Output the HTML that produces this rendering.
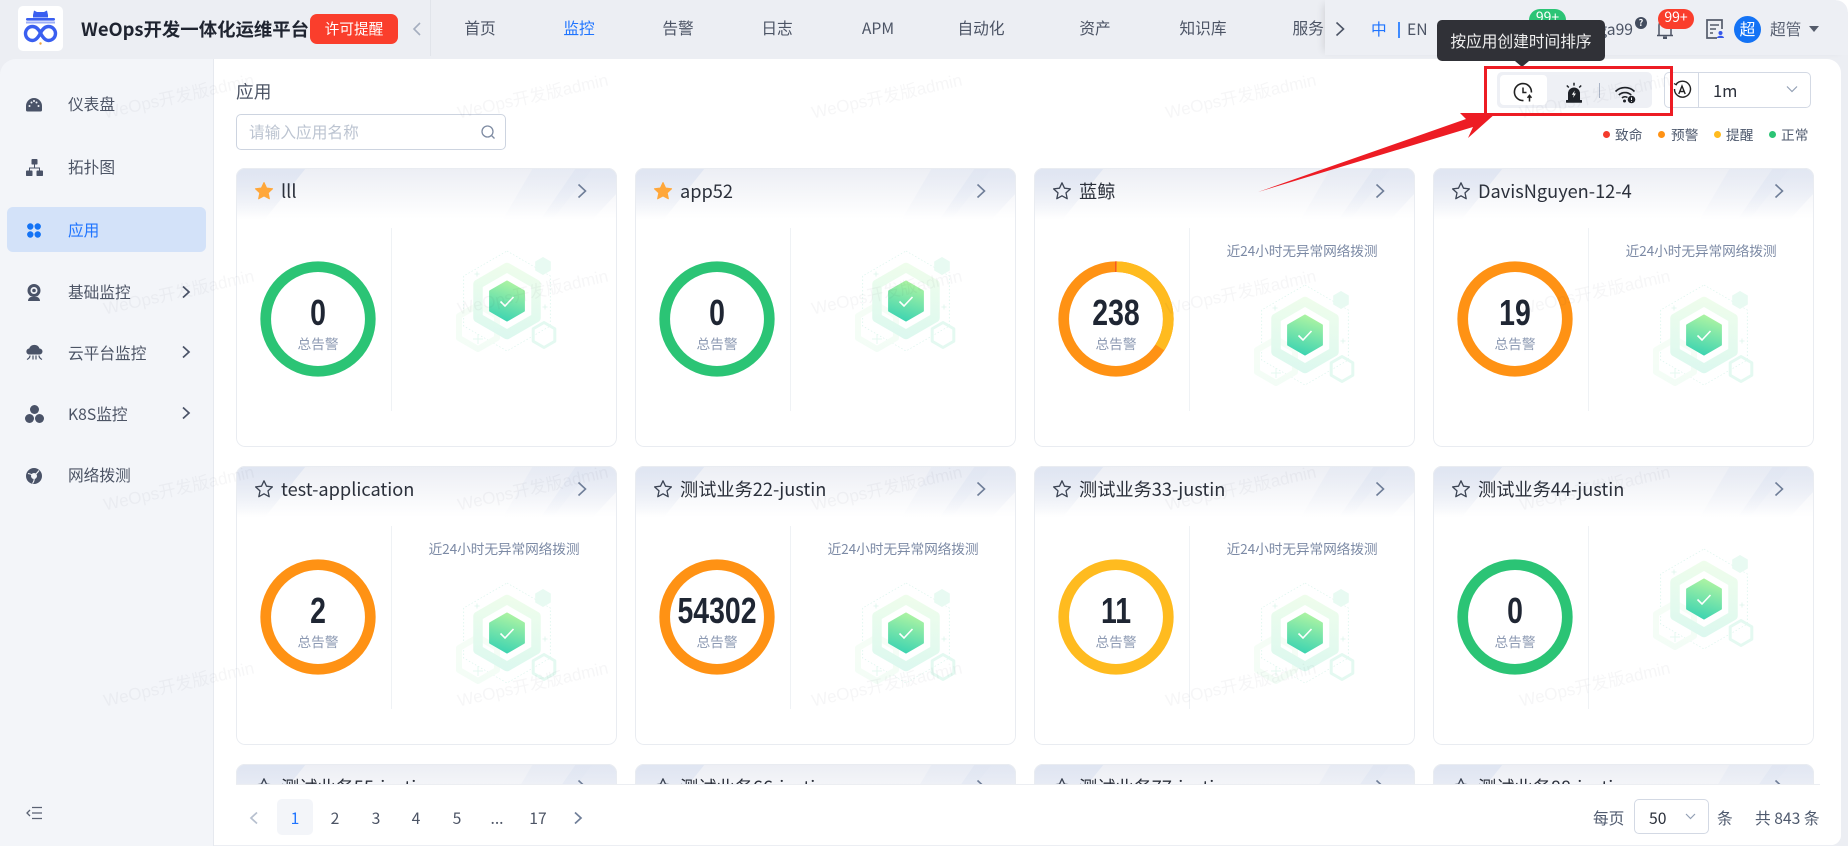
<!DOCTYPE html>
<html lang="zh"><head><meta charset="utf-8"><title>WeOps</title>
<style>
*{box-sizing:border-box;margin:0;padding:0}
html,body{width:1848px;height:846px;overflow:hidden;background:#eceef3}
body{position:relative;font-family:"Noto Sans CJK SC","Liberation Sans",sans-serif;font-size:15.7px;color:#4a5262}
i{font-style:normal}
.a{position:absolute;white-space:nowrap}
.nav{position:absolute;top:16px;height:24px;line-height:24px;width:100px;text-align:center;white-space:nowrap;color:#4c5465}
svg{position:absolute;overflow:visible}
.side{position:absolute;left:0;top:59px;width:214px;height:787px;background:#f3f5f9;border-right:1px solid #e6e9ef;border-top-left-radius:16px}
.si{position:absolute;left:68px;height:24px;line-height:24px;white-space:nowrap;color:#4c5465}
.main{position:absolute;left:214px;top:59px;width:1627px;height:786px;background:#fff;border-radius:0 14px 10px 0}
.card{position:absolute;width:381px;height:279px;background:#fff;border-radius:9px;overflow:hidden}
.card::after{content:"";position:absolute;left:0;top:0;right:0;bottom:0;border:1px solid #e9ecf1;border-radius:9px;pointer-events:none}
.card.c3{height:30px}
.card>svg{position:absolute}
.h{left:0;top:0}
.s{left:18px;top:13px}
.c{left:340px;top:15px}
.d{left:22px;top:91px}
.i1{left:211px;top:73px}
.i2{left:211px;top:107px}
.t{position:absolute;left:45px;top:9px;height:28px;line-height:28px;font-size:18.2px;color:#2b303b;white-space:nowrap}
.dv{position:absolute;left:155px;top:60px;width:1px;height:183px;background:#eff2f5}
.n{position:absolute;left:22px;width:120px;top:125px;height:40px;text-align:center;font:bold 36px/40px "Liberation Sans",sans-serif;color:#1f2633;transform:scaleX(.79)}
.l{position:absolute;left:22px;width:120px;top:165px;height:20px;line-height:20px;text-align:center;font-size:13.7px;color:#8d9ab3}
.txt{position:absolute;left:155px;width:226px;top:72px;height:20px;line-height:20px;text-align:center;font-size:13.7px;color:#7c8aa5;white-space:nowrap;letter-spacing:-.1px}
.pg{position:absolute;top:806px;height:24px;line-height:24px;width:36px;text-align:center;color:#4c5465}
.lg{position:absolute;top:124px;height:20px;line-height:20px;font-size:13.7px;color:#4f5a6e;white-space:nowrap}
.dot{position:absolute;top:131px;width:7px;height:7px;border-radius:50%}
.wm{position:absolute;width:170px;text-align:center;font:17px/22px "Liberation Sans","Noto Sans CJK SC",sans-serif;color:rgba(40,52,80,.042);transform:rotate(-12.5deg);white-space:nowrap;pointer-events:none;z-index:50}
</style></head><body>
<svg width="0" height="0" style="position:absolute">
<defs>
<linearGradient id="hb" x1="0" y1="0" x2="0" y2="1"><stop offset="0" stop-color="#eceef4"/><stop offset="1" stop-color="#fff"/></linearGradient>
<linearGradient id="hs" x1="0" y1="0" x2="0" y2="1"><stop offset="0" stop-color="#dfe5f2"/><stop offset="1" stop-color="#dfe5f2" stop-opacity="0"/></linearGradient>
<linearGradient id="g1" gradientUnits="userSpaceOnUse" x1="8" y1="-20" x2="-4" y2="20"><stop offset="0" stop-color="#b2f5a2"/><stop offset="1" stop-color="#3cd4b1"/></linearGradient>
<linearGradient id="g2" gradientUnits="userSpaceOnUse" x1="5" y1="-38" x2="-5" y2="38"><stop offset="0" stop-color="#effdec"/><stop offset="1" stop-color="#dcf8ef"/></linearGradient>
<linearGradient id="g3" gradientUnits="userSpaceOnUse" x1="0" y1="0" x2="0" y2="52"><stop offset="0" stop-color="#f5fdf6"/><stop offset="1" stop-color="#f0fcf6"/></linearGradient>
<symbol id="hd" viewBox="0 0 381 51" width="381" height="51">
<rect width="381" height="51" fill="url(#hb)"/>
<polygon points="0,0 70,0 29,51 0,51" fill="url(#hs)"/>
<polygon points="297,0 357,0 317,51 267,51" fill="url(#hs)" opacity=".45"/>
<polygon points="340,0 381,0 381,25 357,51 305,51" fill="url(#hs)" opacity=".8"/>
</symbol>
<symbol id="ill" viewBox="-60 -60 120 120" width="120" height="120">
<polygon points="0,-50 43.3,-25 43.3,25 0,50 -43.3,25 -43.3,-25" fill="none" stroke="#d6f3ea" stroke-width=".7" stroke-dasharray="1.5 2"/>
<g transform="translate(-29,26)"><polygon points="0,-22 19,-11 19,11 0,22 -19,11 -19,-11" fill="none" stroke="url(#g3)" stroke-width="6" stroke-linejoin="round"/><path d="M-5 12h10M0 7v10" stroke="#e6f8f0" stroke-width="1"/></g>
<polygon points="0,-33.5 29,-16.75 29,16.75 0,33.5 -29,16.75 -29,-16.75" fill="none" stroke="url(#g2)" stroke-width="9.5" stroke-linejoin="round"/>
<polygon points="0,-19.5 16.9,-9.75 16.9,9.75 0,19.5 -16.9,9.75 -16.9,-9.75" fill="url(#g1)" stroke="url(#g1)" stroke-width="2" stroke-linejoin="round"/>
<path d="M-6.5 .5L-2 5 6.5-4" fill="none" stroke="#fff" stroke-width="1.6"/>
<polygon points="36,-44 43.8,-39.5 43.8,-30.5 36,-26 28.2,-30.5 28.2,-39.500" fill="#e8faf2"/>
<polygon points="37,21.5 47.8,27.75 47.8,40.25 37,46.5 26.2,40.25 26.2,27.75" fill="none" stroke="#e4f9f1" stroke-width="3" stroke-linejoin="round"/>
<path d="M-30-29.5v5M-32.5-27h5M38 3.5v5M35.5 6h5" stroke="#dcf5ec" stroke-width=".8"/>
</symbol>
<symbol id="st" viewBox="0 0 20 20" width="20" height="20"><path d="M10 1.8l2.5 5.4 5.9.7-4.4 4 1.2 5.8L10 14.8l-5.2 2.9L6 11.9l-4.4-4 5.9-.7z" fill="none" stroke="#3c4454" stroke-width="1.3" stroke-linejoin="round"/></symbol>
<symbol id="sf" viewBox="0 0 20 20" width="20" height="20"><path d="M10 1.5l2.6 5.5 6 .8-4.4 4.1 1.2 5.9L10 14.9l-5.4 2.9 1.2-5.9L1.400 7.800l6-.8z" fill="#ffa73a" stroke="#ffa73a" stroke-width="1" stroke-linejoin="round"/></symbol>
<symbol id="ch" viewBox="0 0 12 16" width="12" height="16"><path d="M2.500 1.500L9.500 8l-7 6.500" fill="none" stroke="#6f7e98" stroke-width="1.600"/></symbol>
</defs></svg>

<!-- header -->
<div class="a" style="left:18px;top:6px;width:45px;height:45px;background:#fff;border-radius:5px"></div>
<svg style="left:18px;top:6px" width="45" height="45" viewBox="0 0 45 45">
<path d="M15 9l1-4.500 3 1.500h7l3-1.500 1 4.500 0 2.500H15z" fill="#3a5ff0"/>
<rect x="8" y="12" width="29" height="2.600" rx="1.300" fill="#3a5ff0"/>
<rect x="8" y="15.500" width="29" height="2" fill="#5d79f2" opacity=".6"/>
<path d="M22.500 27c-2-4-4.500-6.500-8-6.500a7 7 0 0 0 0 14c3.500 0 6-3.500 8-7.500 2 4 4.500 7.500 8 7.500a7 7 0 0 0 0-14c-3.500 0-6 2.500-8 6.500z" fill="none" stroke="#3a5ff0" stroke-width="3.400"/>
<circle cx="22.500" cy="37.500" r="1.200" fill="#f0a23a"/>
</svg>
<div class="a" style="left:81px;top:16px;height:26px;line-height:26px;font-size:18.400px;font-weight:700;color:#1f2430">WeOps开发一体化运维平台</div>
<div class="a" style="left:310px;top:14px;width:88px;height:30px;line-height:30px;background:#fa3e2c;border-radius:7px;color:#fff;text-align:center;font-size:14.700px">许可提醒</div>
<svg style="left:412px;top:21px" width="10" height="16" viewBox="0 0 10 16"><path d="M8 2L2 8l6 6" fill="none" stroke="#a5aebf" stroke-width="1.600"/></svg>
<div class="a" style="left:430px;top:0;width:1px;height:56px;background:#e1e4ea"></div>
<div class="nav" style="left:430px">首页</div>
<div class="nav" style="left:529px;color:#1f74ff">监控</div>
<div class="nav" style="left:628px">告警</div>
<div class="nav" style="left:727px">日志</div>
<div class="nav" style="left:828px">APM</div>
<div class="nav" style="left:931px">自动化</div>
<div class="nav" style="left:1045px">资产</div>
<div class="nav" style="left:1153px">知识库</div>
<div class="nav" style="left:1266px">服务台</div>
<div class="a" style="left:1325px;top:0;width:523px;height:55px;background:#edeff4;box-shadow:-5px 0 8px -4px rgba(0,0,0,.12)"></div>
<svg style="left:1334px;top:21px" width="12" height="16" viewBox="0 0 12 16"><path d="M2.500 1.500L9.500 8l-7 6.500" fill="none" stroke="#4c5465" stroke-width="1.600"/></svg>
<div class="a" style="left:1371px;top:17px;height:24px;line-height:24px;color:#1f74ff">中</div>
<div class="a" style="left:1398px;top:22px;width:1.500px;height:16px;background:#3f8bff"></div>
<div class="a" style="left:1407px;top:17px;height:24px;line-height:24px;color:#4c5465">EN</div>
<div class="a" style="left:1529px;top:9px;width:37px;height:24px;line-height:17px;background:#2bc475;border-radius:11px;color:#fff;text-align:center;font-size:14px">99+</div>
<div class="a" style="left:1590px;top:17px;height:24px;line-height:24px;color:#4c5465;width:43px;text-align:right">ga99</div>
<div class="a" style="left:1635px;top:17px;width:12px;height:12px;line-height:12px;border-radius:50%;background:#434c5e;color:#fff;text-align:center;font-size:9px;font-weight:700">?</div>
<svg style="left:1656px;top:20px" width="18" height="20" viewBox="0 0 18 20"><path d="M3 15V5a4 4 0 0 1 4-4h4a4 4 0 0 1 4 4v10" fill="none" stroke="#4c5465" stroke-width="1.500"/><path d="M1 15.500h16" stroke="#4c5465" stroke-width="1.500"/><rect x="7" y="16.500" width="4" height="2.500" fill="#4c5465"/></svg>
<div class="a" style="left:1658px;top:9px;width:36px;height:20px;line-height:17px;background:#fa3e2c;border-radius:10px;color:#fff;text-align:center;font-size:14px">99+</div>
<svg style="left:1705px;top:18px" width="20" height="22" viewBox="0 0 20 22"><path d="M17 11V2H2v18h10" fill="none" stroke="#555c6b" stroke-width="1.700"/><path d="M5 7h9M5 11h6M5 15h3" stroke="#555c6b" stroke-width="1.500"/><circle cx="15.500" cy="15" r="2" fill="#3557ea"/><path d="M12 20c0-3 7-3 7 0z" fill="#3557ea"/></svg>
<div class="a" style="left:1734px;top:16px;width:27px;height:27px;line-height:26px;background:#1473f5;border-radius:50%;color:#fff;text-align:center;font-size:15.700px">超</div>
<div class="a" style="left:1770px;top:17px;height:24px;line-height:24px;color:#5a6273">超管</div>
<div class="a" style="left:1809px;top:26px;width:0;height:0;border-left:5px solid transparent;border-right:5px solid transparent;border-top:6px solid #555c6b"></div>
<div class="a" style="left:1836px;top:0;width:12px;height:12px;background:radial-gradient(circle at 0 100%,#edeff4 11.500px,#fff 12px)"></div>

<!-- sidebar -->
<div class="side"></div>
<div class="a" style="left:7px;top:207px;width:199px;height:45px;background:#d3e2f9;border-radius:6px"></div>
<svg style="left:26px;top:98px" width="16" height="14" viewBox="0 0 16 14"><path d="M0 8a8 8 0 0 1 16 0v4a1.500 1.500 0 0 1-1.500 1.500h-13A1.500 1.500 0 0 1 0 12z" fill="#4a5368"/><g fill="#f3f5f9"><circle cx="3.500" cy="8" r="1"/><circle cx="5.500" cy="4.500" r="1"/><circle cx="10.500" cy="4.500" r="1"/><circle cx="12.500" cy="8" r="1"/><circle cx="8" cy="3" r="1"/></g></svg>
<svg style="left:26px;top:159px" width="17" height="17" viewBox="0 0 17 17" fill="#4a5368"><rect x="5.500" y="0" width="6" height="5.500" rx=".8"/><rect x="0" y="11.500" width="6.500" height="5.500" rx=".8"/><rect x="10.500" y="11.500" width="6.500" height="5.500" rx=".8"/><path d="M8 5h1v3.500h5V12h-1V9.500H4V12H3V8.500h5z"/></svg>
<svg style="left:27px;top:223px" width="14" height="15" viewBox="0 0 14 15" fill="#1473f5"><circle cx="3.300" cy="3.500" r="3.200"/><circle cx="10.700" cy="3.500" r="3.200"/><circle cx="3.300" cy="11.500" r="3.200"/><circle cx="10.700" cy="11.500" r="3.200"/></svg>
<svg style="left:27px;top:284px" width="14" height="17" viewBox="0 0 14 17"><circle cx="7" cy="6.500" r="6.500" fill="#4a5368"/><circle cx="7" cy="6.500" r="3.500" fill="#f3f5f9"/><circle cx="7" cy="6.500" r="1.800" fill="#4a5368"/><path d="M1 17c0-2.500 2-4 3-4h6c1 0 3 1.500 3 4z" fill="#4a5368"/></svg>
<svg style="left:26px;top:345px" width="17" height="16" viewBox="0 0 17 16"><path d="M3.500 9.500a3 3 0 0 1-.3-6A5.500 5.500 0 0 1 13.500 3.500a3 3 0 0 1 0 6z" fill="#4a5368"/><path d="M4 10.500c0 2-1 3-3 4M7 10.500v4M10 10.500v4M13 10.500c0 2 1 3 3 4" stroke="#4a5368" stroke-width="1.200" fill="none"/></svg>
<svg style="left:25px;top:405px" width="19" height="18" viewBox="0 0 19 18" fill="#4a5368"><circle cx="9.500" cy="4.500" r="4.500"/><circle cx="4.500" cy="13.500" r="4.500"/><circle cx="14.500" cy="13.500" r="4.500"/></svg>
<svg style="left:26px;top:468px" width="16" height="16" viewBox="0 0 16 16"><circle cx="8" cy="8" r="8" fill="#4a5368"/><circle cx="8" cy="8" r="3" fill="#f3f5f9"/><path d="M2 5.500c3 .5 4.500 1 5 2.500M13 2.500c-1.500 2-3 3.500-4 4M8 9.500c.5 2 0 4-1.500 6" stroke="#f3f5f9" stroke-width="1.100" fill="none"/></svg>
<div class="si" style="top:92px">仪表盘</div>
<div class="si" style="top:155px">拓扑图</div>
<div class="si" style="top:218px;color:#1f74ff">应用</div>
<div class="si" style="top:280px">基础监控</div>
<div class="si" style="top:341px">云平台监控</div>
<div class="si" style="top:402px">K8S监控</div>
<div class="si" style="top:463px">网络拨测</div>
<svg style="left:181px;top:285px" width="10" height="14" viewBox="0 0 10 14"><path d="M2 1.500L8 7l-6 5.500" fill="none" stroke="#4a5368" stroke-width="1.700"/></svg>
<svg style="left:181px;top:345px" width="10" height="14" viewBox="0 0 10 14"><path d="M2 1.500L8 7l-6 5.500" fill="none" stroke="#4a5368" stroke-width="1.700"/></svg>
<svg style="left:181px;top:406px" width="10" height="14" viewBox="0 0 10 14"><path d="M2 1.500L8 7l-6 5.500" fill="none" stroke="#4a5368" stroke-width="1.700"/></svg>
<svg style="left:26px;top:806px" width="16" height="14" viewBox="0 0 16 14"><path d="M6 1.500h10M6 7h10M6 12.500h10" stroke="#5a6273" stroke-width="1.300"/><path d="M4 4L1 7l3 3" fill="none" stroke="#5a6273" stroke-width="1.300"/></svg>

<!-- main -->
<div class="main"></div>
<div class="a" style="left:236px;top:78px;height:26px;line-height:26px;font-size:17.700px;color:#4c5465">应用</div>
<div class="a" style="left:236px;top:114px;width:270px;height:36px;border:1px solid #cdd4e0;border-radius:5px;background:#fff"></div>
<div class="a" style="left:249px;top:120px;height:24px;line-height:24px;color:#bcc4d1">请输入应用名称</div>
<svg style="left:481px;top:125px" width="15" height="15" viewBox="0 0 15 15"><circle cx="6.500" cy="6.500" r="5.500" fill="none" stroke="#7f8ca3" stroke-width="1.300"/><path d="M10.500 10.500l3 3" stroke="#7f8ca3" stroke-width="1.300"/></svg>

<div class="a" style="left:1497px;top:72px;width:155px;height:36px;background:#eef0f5;border-radius:5px"></div>
<div class="a" style="left:1500px;top:75px;width:47px;height:30px;background:#fff;border-radius:4px"></div>
<div class="a" style="left:1599px;top:83px;width:1px;height:15px;background:#aab4c6"></div>
<svg style="left:1511px;top:80px" width="24" height="24" viewBox="0 0 24 24"><path d="M20.400 12.500A8.500 8.500 0 1 0 12.500 20.500" fill="none" stroke="#222" stroke-width="1.600"/><path d="M12 7.500v5h3.500" fill="none" stroke="#222" stroke-width="1.500"/><path d="M18.500 21.500v-6M16.500 17.800l2-2.500 2 2.500" fill="none" stroke="#222" stroke-width="1.500"/></svg>
<svg style="left:1562px;top:81px" width="24" height="24" viewBox="0 0 24 24"><path d="M6 19v-6.500a6 6 0 0 1 12 0V19z" fill="#1f2228"/><rect x="4" y="19" width="16" height="2.800" rx=".5" fill="#1f2228"/><path d="M12 1.800v2.800M4.800 4.500l2 2M19.200 4.500l-2 2" stroke="#1f2228" stroke-width="1.500"/><path d="M12.800 9.500l-3 4.200h2l-.8 3 3-4.200h-2z" fill="#fff"/></svg>
<svg style="left:1613px;top:81px" width="24" height="24" viewBox="0 0 24 24"><path d="M2.500 10.500a13.500 13.500 0 0 1 19 0M5.800 14a9 9 0 0 1 12.400 0M9 17a4.500 4.500 0 0 1 5.500-.5" fill="none" stroke="#1f2228" stroke-width="1.600"/><circle cx="11.500" cy="20" r="1.500" fill="#1f2228"/><circle cx="18.500" cy="18.500" r="3.800" fill="#1f2228"/><path d="M18.500 16.500v2.500M18.500 20v.8" stroke="#fff" stroke-width="1"/></svg>

<div class="a" style="left:1664px;top:72px;width:147px;height:36px;border:1px solid #d3d9e4;border-radius:5px;background:#fff"></div>
<div class="a" style="left:1698px;top:72px;width:1px;height:36px;background:#d3d9e4"></div>
<svg style="left:1673px;top:81px" width="18" height="18" viewBox="0 0 18 18"><path d="M3 3.500A8 8 0 1 1 1.500 8" fill="none" stroke="#222" stroke-width="1.400"/><path d="M1 2.500l2.200 1.300L4.500 1.500" fill="none" stroke="#222" stroke-width="1.200"/><path d="M5.800 13L9 5l3.200 8M6.800 10.500h4.400" fill="none" stroke="#222" stroke-width="1.400"/></svg>
<div class="a" style="left:1713px;top:78px;height:24px;line-height:24px;font-size:16.500px;color:#2b303b">1m</div>
<svg style="left:1786px;top:85px" width="12" height="8" viewBox="0 0 12 8"><path d="M1 1.500l5 5 5-5" fill="none" stroke="#93a0b5" stroke-width="1.200"/></svg>

<i class="dot" style="left:1603px;background:#f43b2c"></i><span class="lg" style="left:1615px">致命</span>
<i class="dot" style="left:1658px;background:#ff9214"></i><span class="lg" style="left:1671px">预警</span>
<i class="dot" style="left:1714px;background:#ffbb1f"></i><span class="lg" style="left:1726px">提醒</span>
<i class="dot" style="left:1769px;background:#2bc475"></i><span class="lg" style="left:1781px">正常</span>

<!-- row 1 -->
<div class="card" style="left:236px;top:168px"><svg class="h" width="381" height="51"><use href="#hd"/></svg><svg class="s" width="20" height="20"><use href="#sf"/></svg><span class="t">lll</span><svg class="c" width="12" height="16"><use href="#ch"/></svg><i class="dv"></i><svg class="d" width="120" height="120" viewBox="0 0 120 120"><circle cx="60" cy="60" r="52.300" fill="none" stroke="#2bc475" stroke-width="10.700"/></svg><b class="n">0</b><span class="l">总告警</span><svg class="i1" width="120" height="120"><use href="#ill"/></svg></div>
<div class="card" style="left:635px;top:168px"><svg class="h" width="381" height="51"><use href="#hd"/></svg><svg class="s" width="20" height="20"><use href="#sf"/></svg><span class="t">app52</span><svg class="c" width="12" height="16"><use href="#ch"/></svg><i class="dv"></i><svg class="d" width="120" height="120" viewBox="0 0 120 120"><circle cx="60" cy="60" r="52.300" fill="none" stroke="#2bc475" stroke-width="10.700"/></svg><b class="n">0</b><span class="l">总告警</span><svg class="i1" width="120" height="120"><use href="#ill"/></svg></div>
<div class="card" style="left:1034px;top:168px"><svg class="h" width="381" height="51"><use href="#hd"/></svg><svg class="s" width="20" height="20"><use href="#st"/></svg><span class="t">蓝鲸</span><svg class="c" width="12" height="16"><use href="#ch"/></svg><i class="dv"></i><svg class="d" width="120" height="120" viewBox="0 0 120 120"><circle cx="60" cy="60" r="52.300" fill="none" stroke="#ff9214" stroke-width="10.700"/><circle cx="60" cy="60" r="52.300" fill="none" stroke="#ffbb1f" stroke-width="10.700" pathLength="360" stroke-dasharray="123 237" transform="rotate(-90 60 60)"/><circle cx="60" cy="60" r="52.300" fill="none" stroke="#f43b2c" stroke-width="10.700" pathLength="360" stroke-dasharray="1 359" transform="rotate(-90.500 60 60)"/></svg><b class="n">238</b><span class="l">总告警</span><i class="txt">近24小时无异常网络拨测</i><svg class="i2" width="120" height="120"><use href="#ill"/></svg></div>
<div class="card" style="left:1433px;top:168px"><svg class="h" width="381" height="51"><use href="#hd"/></svg><svg class="s" width="20" height="20"><use href="#st"/></svg><span class="t">DavisNguyen-12-4</span><svg class="c" width="12" height="16"><use href="#ch"/></svg><i class="dv"></i><svg class="d" width="120" height="120" viewBox="0 0 120 120"><circle cx="60" cy="60" r="52.300" fill="none" stroke="#ff9214" stroke-width="10.700"/></svg><b class="n">19</b><span class="l">总告警</span><i class="txt">近24小时无异常网络拨测</i><svg class="i2" width="120" height="120"><use href="#ill"/></svg></div>
<!-- row 2 -->
<div class="card" style="left:236px;top:466px"><svg class="h" width="381" height="51"><use href="#hd"/></svg><svg class="s" width="20" height="20"><use href="#st"/></svg><span class="t">test-application</span><svg class="c" width="12" height="16"><use href="#ch"/></svg><i class="dv"></i><svg class="d" width="120" height="120" viewBox="0 0 120 120"><circle cx="60" cy="60" r="52.300" fill="none" stroke="#ff9214" stroke-width="10.700"/></svg><b class="n">2</b><span class="l">总告警</span><i class="txt">近24小时无异常网络拨测</i><svg class="i2" width="120" height="120"><use href="#ill"/></svg></div>
<div class="card" style="left:635px;top:466px"><svg class="h" width="381" height="51"><use href="#hd"/></svg><svg class="s" width="20" height="20"><use href="#st"/></svg><span class="t">测试业务22-justin</span><svg class="c" width="12" height="16"><use href="#ch"/></svg><i class="dv"></i><svg class="d" width="120" height="120" viewBox="0 0 120 120"><circle cx="60" cy="60" r="52.300" fill="none" stroke="#ff9214" stroke-width="10.700"/></svg><b class="n">54302</b><span class="l">总告警</span><i class="txt">近24小时无异常网络拨测</i><svg class="i2" width="120" height="120"><use href="#ill"/></svg></div>
<div class="card" style="left:1034px;top:466px"><svg class="h" width="381" height="51"><use href="#hd"/></svg><svg class="s" width="20" height="20"><use href="#st"/></svg><span class="t">测试业务33-justin</span><svg class="c" width="12" height="16"><use href="#ch"/></svg><i class="dv"></i><svg class="d" width="120" height="120" viewBox="0 0 120 120"><circle cx="60" cy="60" r="52.300" fill="none" stroke="#ffbb1f" stroke-width="10.700"/></svg><b class="n">11</b><span class="l">总告警</span><i class="txt">近24小时无异常网络拨测</i><svg class="i2" width="120" height="120"><use href="#ill"/></svg></div>
<div class="card" style="left:1433px;top:466px"><svg class="h" width="381" height="51"><use href="#hd"/></svg><svg class="s" width="20" height="20"><use href="#st"/></svg><span class="t">测试业务44-justin</span><svg class="c" width="12" height="16"><use href="#ch"/></svg><i class="dv"></i><svg class="d" width="120" height="120" viewBox="0 0 120 120"><circle cx="60" cy="60" r="52.300" fill="none" stroke="#2bc475" stroke-width="10.700"/></svg><b class="n">0</b><span class="l">总告警</span><svg class="i1" width="120" height="120"><use href="#ill"/></svg></div>
<!-- row 3 -->
<div class="card c3" style="left:236px;top:764px"><svg class="h" width="381" height="51"><use href="#hd"/></svg><svg class="s" width="20" height="20"><use href="#st"/></svg><span class="t">测试业务55-justin</span><svg class="c" width="12" height="16"><use href="#ch"/></svg></div>
<div class="card c3" style="left:635px;top:764px"><svg class="h" width="381" height="51"><use href="#hd"/></svg><svg class="s" width="20" height="20"><use href="#st"/></svg><span class="t">测试业务66-justin</span><svg class="c" width="12" height="16"><use href="#ch"/></svg></div>
<div class="card c3" style="left:1034px;top:764px"><svg class="h" width="381" height="51"><use href="#hd"/></svg><svg class="s" width="20" height="20"><use href="#st"/></svg><span class="t">测试业务77-justin</span><svg class="c" width="12" height="16"><use href="#ch"/></svg></div>
<div class="card c3" style="left:1433px;top:764px"><svg class="h" width="381" height="51"><use href="#hd"/></svg><svg class="s" width="20" height="20"><use href="#st"/></svg><span class="t">测试业务88-justin</span><svg class="c" width="12" height="16"><use href="#ch"/></svg></div>

<!-- pagination -->
<div class="a" style="left:236px;top:784px;width:1584px;height:61px;background:#fff;border-top:1px solid #eceef2"></div>
<div class="a" style="left:1820px;top:784px;width:21px;height:61px;background:#fff;border-bottom-right-radius:10px"></div>
<svg style="left:249px;top:811px" width="10" height="14" viewBox="0 0 10 14"><path d="M8 1.500L2 7l6 5.500" fill="none" stroke="#b7c0cf" stroke-width="1.700"/></svg>
<div class="a" style="left:277px;top:799px;width:36px;height:36px;background:#f3f5f9;border-radius:5px"></div>
<div class="pg" style="left:277px;color:#1f74ff">1</div>
<div class="pg" style="left:317px">2</div>
<div class="pg" style="left:358px">3</div>
<div class="pg" style="left:398px">4</div>
<div class="pg" style="left:439px">5</div>
<div class="pg" style="left:479px">...</div>
<div class="pg" style="left:520px">17</div>
<svg style="left:573px;top:811px" width="10" height="14" viewBox="0 0 10 14"><path d="M2 1.500L8 7l-6 5.500" fill="none" stroke="#6f7e98" stroke-width="1.700"/></svg>
<div class="a" style="left:1593px;top:806px;height:24px;line-height:24px;color:#4f5a6e">每页</div>
<div class="a" style="left:1634px;top:799px;width:75px;height:35px;border:1px solid #d3d9e4;border-radius:5px;background:#fff"></div>
<div class="a" style="left:1649px;top:806px;height:24px;line-height:24px;color:#2b303b">50</div>
<svg style="left:1685px;top:813px" width="11" height="7" viewBox="0 0 11 7"><path d="M1 1l4.500 4.500L10 1" fill="none" stroke="#93a0b5" stroke-width="1.200"/></svg>
<div class="a" style="left:1717px;top:806px;height:24px;line-height:24px;color:#4f5a6e">条</div>
<div class="a" style="left:1755px;top:806px;height:24px;line-height:24px;color:#4f5a6e">共 843 条</div>

<!-- watermark -->
<div class="wm" style="left:94px;top:86px">WeOps开发版admin</div><div class="wm" style="left:448px;top:86px">WeOps开发版admin</div><div class="wm" style="left:802px;top:86px">WeOps开发版admin</div><div class="wm" style="left:1156px;top:86px">WeOps开发版admin</div><div class="wm" style="left:1510px;top:86px">WeOps开发版admin</div>
<div class="wm" style="left:94px;top:282px">WeOps开发版admin</div><div class="wm" style="left:448px;top:282px">WeOps开发版admin</div><div class="wm" style="left:802px;top:282px">WeOps开发版admin</div><div class="wm" style="left:1156px;top:282px">WeOps开发版admin</div><div class="wm" style="left:1510px;top:282px">WeOps开发版admin</div>
<div class="wm" style="left:94px;top:478px">WeOps开发版admin</div><div class="wm" style="left:448px;top:478px">WeOps开发版admin</div><div class="wm" style="left:802px;top:478px">WeOps开发版admin</div><div class="wm" style="left:1156px;top:478px">WeOps开发版admin</div><div class="wm" style="left:1510px;top:478px">WeOps开发版admin</div>
<div class="wm" style="left:94px;top:674px">WeOps开发版admin</div><div class="wm" style="left:448px;top:674px">WeOps开发版admin</div><div class="wm" style="left:802px;top:674px">WeOps开发版admin</div><div class="wm" style="left:1156px;top:674px">WeOps开发版admin</div><div class="wm" style="left:1510px;top:674px">WeOps开发版admin</div>

<!-- tooltip + annotation -->
<div class="a" style="left:1437px;top:20px;width:168px;height:41px;line-height:41px;background:#303137;border-radius:5px;color:#f0f0f0;text-align:center;z-index:60">按应用创建时间排序</div>
<div class="a" style="left:1515px;top:61px;width:0;height:0;border-left:7px solid transparent;border-right:7px solid transparent;border-top:6px solid #303137;z-index:60"></div>
<div class="a" style="left:1484px;top:66px;width:189px;height:50px;border:3px solid #ed1c24;z-index:61"></div>
<svg style="left:0;top:0;z-index:62" width="1848" height="846"><polygon points="1258,192 1466,119 1460,113 1496,113 1468,138 1473,127" fill="#ed1c24"/></svg>
</body></html>
